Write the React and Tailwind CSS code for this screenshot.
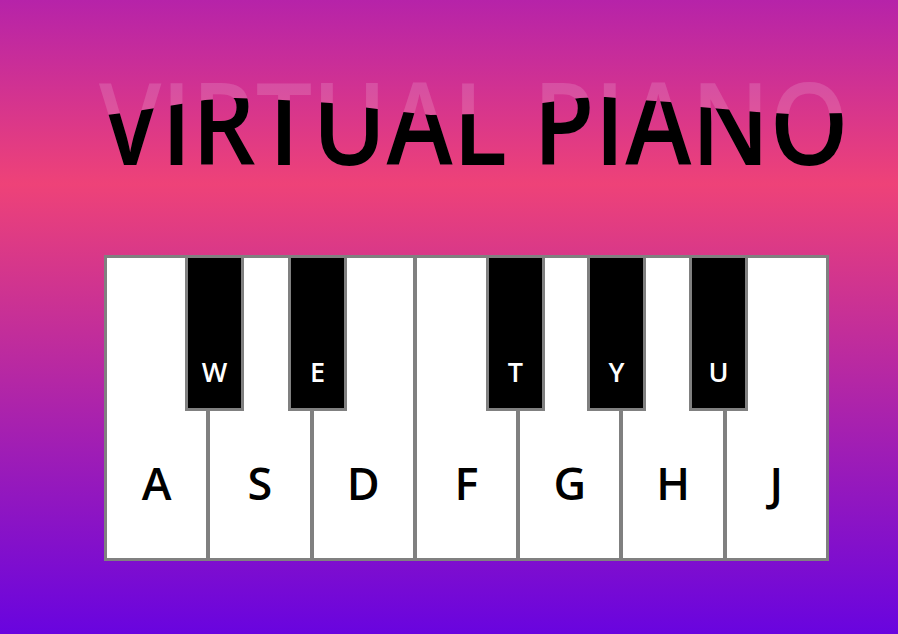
const whiteKeys = ["A", "S", "D", "F", "G", "H", "J"];

const blackKeys = [
  { key: "W", pos: "left-[78px]" },
  { key: "E", pos: "left-[181px]" },
  { key: "T", pos: "left-[379px]" },
  { key: "Y", pos: "left-[480px]" },
  { key: "U", pos: "left-[582px]" },
];

function Title() {
  return (
    <h1 className="relative origin-left scale-x-[0.87] whitespace-nowrap text-[115px] font-semibold leading-none">
      <span className="text-white/15">VIRTUAL PIANO</span>
      {/* wave layer on top */}
      <span className="absolute inset-0 text-black [clip-path:polygon(0px_53px,36px_49px,87px_42px,122px_37px,156px_35px,191px_36px,231px_38px,266px_40px,329px_47px,381px_52px,438px_51px,484px_45px,510px_40px,553px_35px,582px_34px,622px_37px,656px_39px,691px_44px,756px_49px,794px_51px,863px_50px,1000px_50px,1000px_200px,0px_200px)]">
        VIRTUAL PIANO
      </span>
    </h1>
  );
}

function Piano() {
  return (
    <div className="relative ml-[5px] mt-[77px] flex h-[306px] w-[725px] border-[3px] border-[#808080] bg-white">
      {whiteKeys.map((k, i) => (
        <div
          key={k}
          className={
            "flex flex-1 flex-col items-center justify-end pb-[53px] " +
            (i > 0 ? "border-l-4 border-[#808080]" : "")
          }
        >
          <span className="text-[45px] font-semibold leading-none text-black">{k}</span>
        </div>
      ))}

      {blackKeys.map((b) => (
        <div
          key={b.key}
          className={
            "absolute -top-[3px] flex h-[156px] w-[59px] flex-col items-center justify-end border-[3px] border-[#808080] bg-black pb-[23px] " +
            b.pos
          }
        >
          <span className="text-[27px] font-semibold leading-none text-white">{b.key}</span>
        </div>
      ))}
    </div>
  );
}

export default function App() {
  return (
    <div
      className="flex h-[634px] w-full flex-col items-start overflow-hidden bg-linear-to-b/srgb from-[#b623a9] via-[#ee4278] via-[29%] to-[#6904df] pl-[99px] pt-[63px]"
      style={{ fontFamily: '"Open Sans", "Noto Sans", sans-serif' }}
    >
      <Title />
      <Piano />
    </div>
  );
}
